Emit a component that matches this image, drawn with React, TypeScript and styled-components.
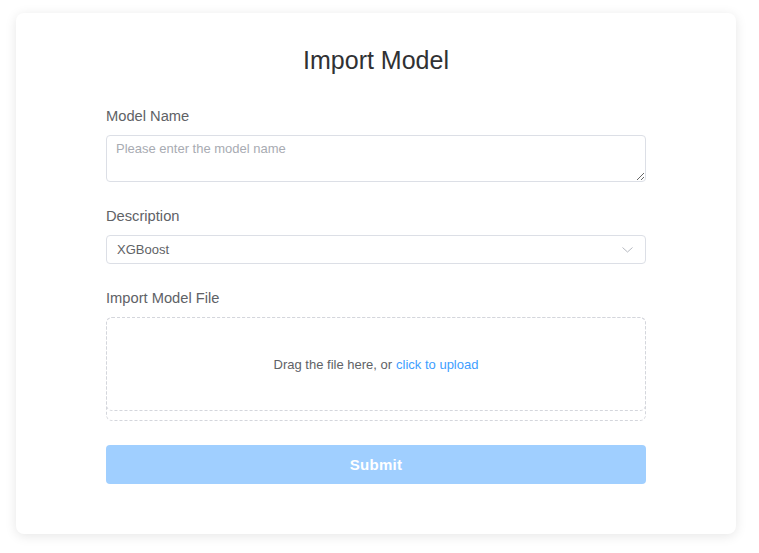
import React from "react";
import styled, { createGlobalStyle } from "styled-components";

const GlobalStyle = createGlobalStyle`
  html, body {
    margin: 0;
    padding: 0;
    background: #ffffff;
    font-family: "Liberation Sans", Arial, sans-serif;
  }
  * { box-sizing: border-box; }
`;

const Page = styled.div`
  padding: 13px 23px 19px 16px;
`;

const Card = styled.div`
  width: 720px;
  background: #ffffff;
  border-radius: 8px;
  box-shadow: 0 2px 12px rgba(0, 0, 0, 0.1);
  padding: 30px 90px 50px;
`;

const Title = styled.h2`
  margin: 0 0 29px;
  text-align: center;
  font-size: 25px;
  line-height: 34px;
  font-weight: 400;
  color: #303133;
`;

const Form = styled.form`
  display: flex;
  flex-direction: column;
  gap: 24px;
`;

const Field = styled.div`
  display: flex;
  flex-direction: column;
  gap: 9px;
`;

const Label = styled.label`
  font-size: 14.7px;
  line-height: 20px;
  color: #606266;
`;

const TextArea = styled.textarea`
  display: block;
  width: 100%;
  height: 47px;
  margin: 0;
  padding: 4px 9px;
  font-family: inherit;
  font-size: 13px;
  line-height: 17px;
  color: #606266;
  border: 1px solid #dcdfe6;
  border-radius: 4px;
  resize: vertical;
  outline: none;
  &::placeholder {
    color: #a8abb2;
  }
`;

const Select = styled.div`
  display: flex;
  align-items: center;
  justify-content: space-between;
  height: 29px;
  padding: 0 12px 0 10px;
  border: 1px solid #dcdfe6;
  border-radius: 4px;
  font-size: 13px;
  color: #606266;
`;

const Chevron = styled.svg`
  width: 11px;
  height: 6px;
  display: block;
`;

const UploadOuter = styled.div`
  border: 1px dashed #d4d6dc;
  border-radius: 6px;
  height: 104px;
`;

const UploadInner = styled.div`
  margin: -1px -1px 0;
  height: 94px;
  border: 1px dashed #d4d6dc;
  border-radius: 6px;
  display: flex;
  align-items: center;
  justify-content: center;
  font-size: 13px;
  color: #606266;
`;

const Link = styled.span`
  color: #409eff;
  margin-left: 4px;
  cursor: pointer;
`;

const SubmitButton = styled.button`
  height: 39px;
  width: 100%;
  border: none;
  border-radius: 4px;
  background: #a0cfff;
  color: #ffffff;
  font-family: inherit;
  font-size: 15px;
  font-weight: 700;
  letter-spacing: 0.3px;
  cursor: not-allowed;
`;

export default function App() {
  return (
    <>
      <GlobalStyle />
      <Page>
        <Card>
          <Title>Import Model</Title>
          <Form onSubmit={(e) => e.preventDefault()}>
            <Field>
              <Label>Model Name</Label>
              <TextArea placeholder="Please enter the model name" />
            </Field>
            <Field>
              <Label>Description</Label>
              <Select>
                <span>XGBoost</span>
                <Chevron viewBox="0 0 11 6" fill="none">
                  <path d="M0.5 0.5 L5.5 5 L10.5 0.5" stroke="#b6b9c0" strokeWidth="1" />
                </Chevron>
              </Select>
            </Field>
            <Field>
              <Label>Import Model File</Label>
              <UploadOuter>
                <UploadInner>
                  Drag the file here, or<Link>click to upload</Link>
                </UploadInner>
              </UploadOuter>
            </Field>
            <SubmitButton type="submit" disabled>
              Submit
            </SubmitButton>
          </Form>
        </Card>
      </Page>
    </>
  );
}
